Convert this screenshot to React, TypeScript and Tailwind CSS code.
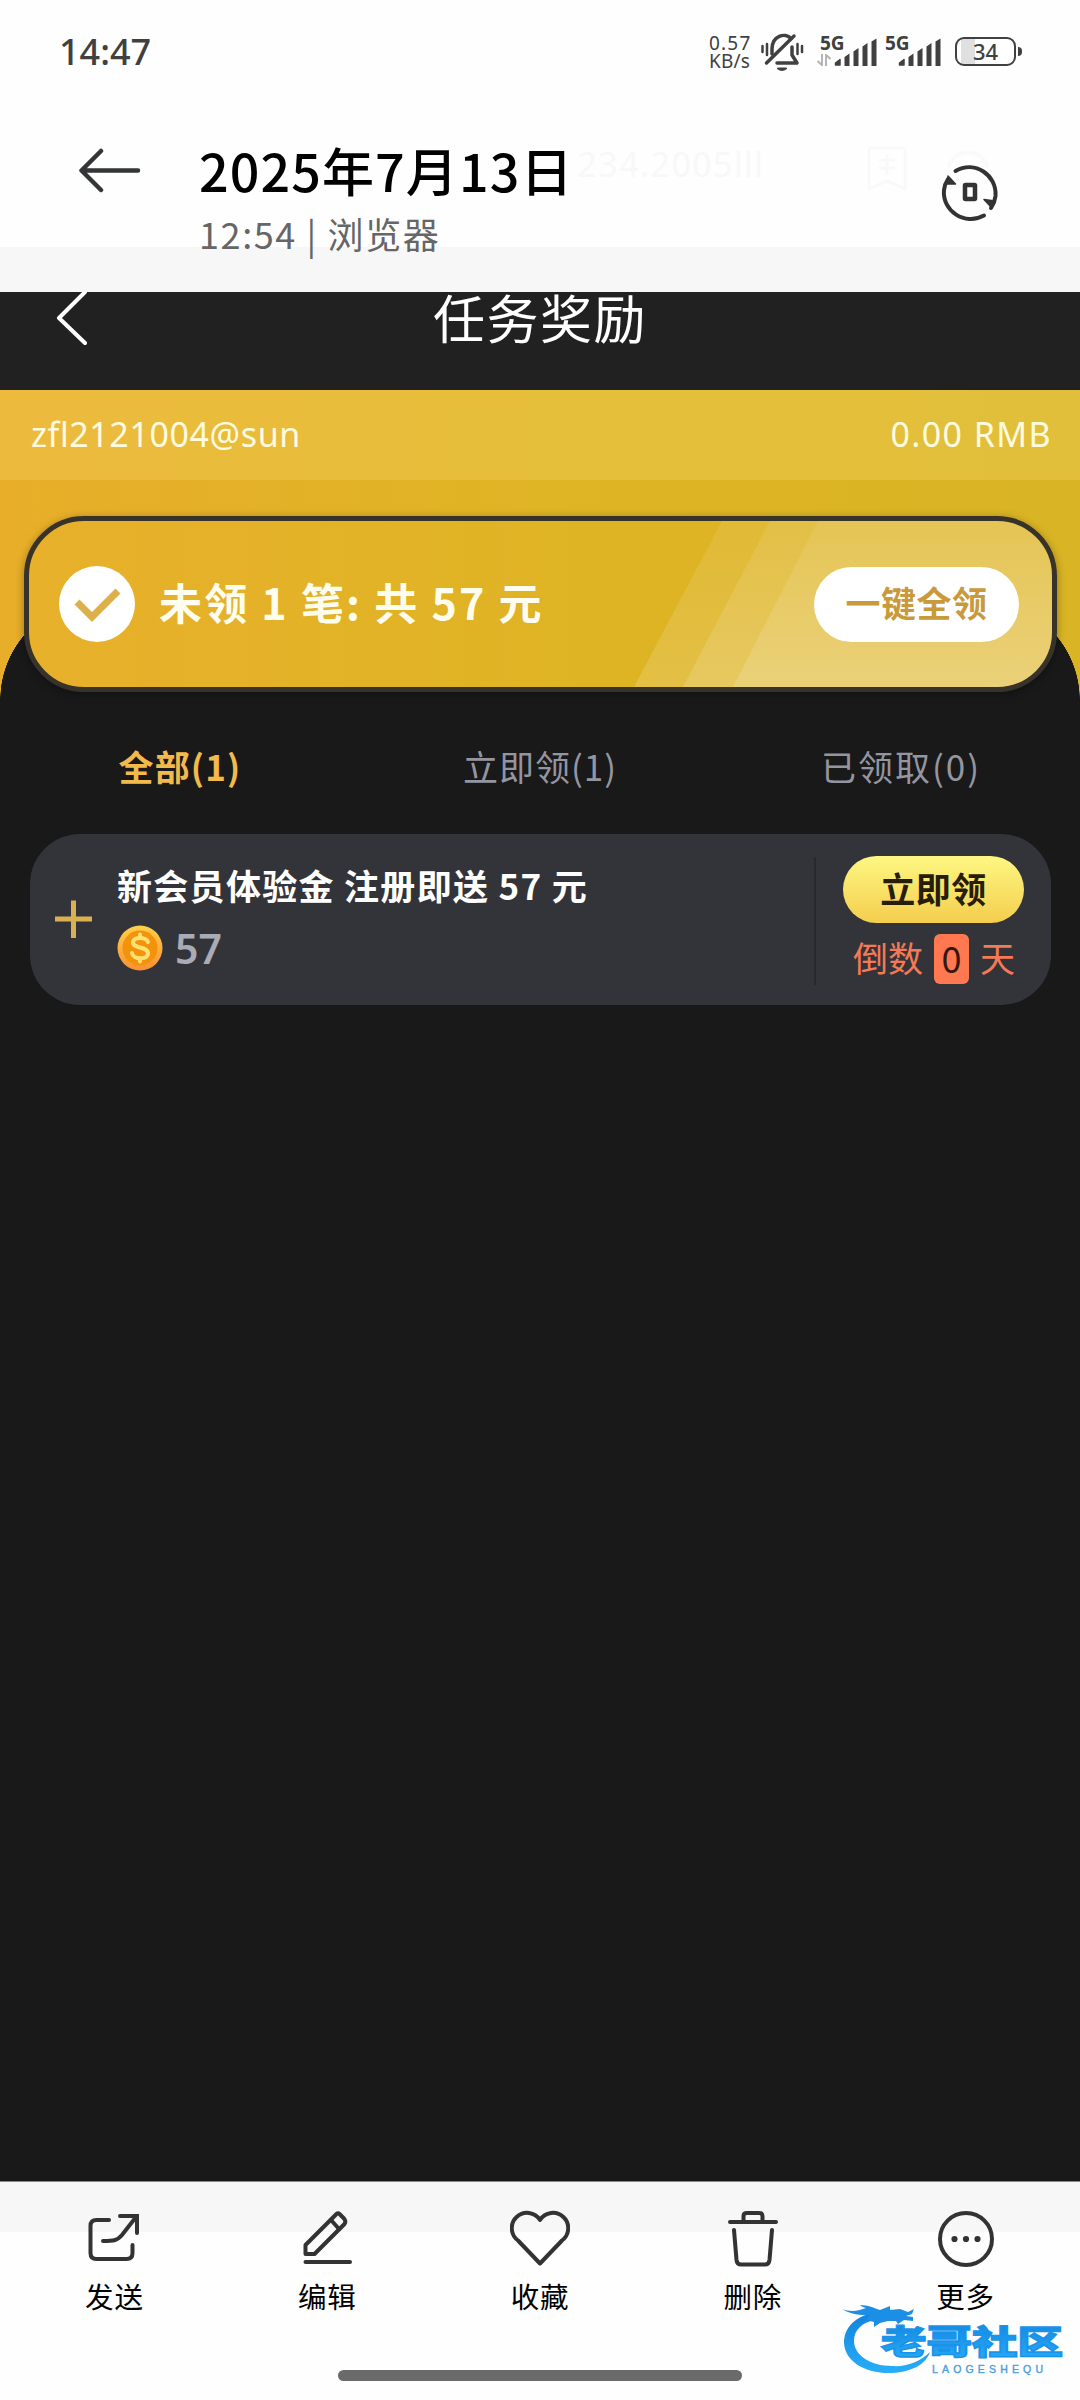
import React from 'react';
import { clsx } from 'clsx';

interface TabItem {
  label: string;
  active?: boolean;
  className: string;
}

interface ActionItem {
  label: string;
  icon: React.ReactNode;
}

const tabs: TabItem[] = [
  { label: '全部(1)', active: true, className: 'tracking-[1.2px]' },
  { label: '立即领(1)', className: 'tracking-[1px]' },
  { label: '已领取(0)', className: 'tracking-[2px] pl-[2px]' },
];

const SendIcon = () => (
  <svg className="h-[60px] w-[60px]" viewBox="0 0 60 60" fill="none" stroke="#333" strokeWidth="4" strokeLinecap="round">
    <path d="M25 12H12.5Q6.500 12 6.500 18V45Q6.500 51 12.500 51H42.500Q48.500 51 48.500 45V37" />
    <path d="M36 8H53V25" strokeLinejoin="miter" />
    <path d="M19 33C29 33 33 33 38 27L52 9" />
  </svg>
);

const EditIcon = () => (
  <svg className="h-[60px] w-[60px]" viewBox="0 0 60 60" fill="none" stroke="#333" strokeWidth="4" strokeLinecap="round" strokeLinejoin="round">
    <path d="M8.500 46V37L39.500 6Q41 4.500 42.500 6L47 10.500Q49.500 13.500 47.500 16L17.500 46Z" />
    <path d="M34 12L42 21" />
    <path d="M8.500 54H53" />
  </svg>
);

const HeartIcon = () => (
  <svg className="h-[60px] w-[60px]" viewBox="0 0 60 60" fill="none" stroke="#333" strokeWidth="4" strokeLinejoin="round">
    <path d="M30 55.500L8 32.500A15.300 15.300 0 1 1 30 12A15.300 15.300 0 1 1 52 32.500Z" />
  </svg>
);

const TrashIcon = () => (
  <svg className="h-[60px] w-[60px]" viewBox="0 0 60 60" fill="none" stroke="#333" strokeWidth="4" strokeLinecap="round" strokeLinejoin="round">
    <path d="M7 14H53" />
    <path d="M20.500 13V8Q20.500 5 24 5H36Q39.500 5 39.500 8V13" />
    <path d="M11 22L13.500 52Q14 56.500 18 56.500H42Q46 56.500 46.500 52L49 22" />
  </svg>
);

const MoreIcon = () => (
  <svg className="h-[60px] w-[60px]" viewBox="0 0 60 60">
    <circle cx="30" cy="31" r="26" fill="none" stroke="#333" strokeWidth="4" />
    <circle cx="18.500" cy="31" r="3.100" fill="#333" />
    <circle cx="30" cy="31" r="3.100" fill="#333" />
    <circle cx="41.500" cy="31" r="3.100" fill="#333" />
  </svg>
);

const actions: ActionItem[] = [
  { label: '发送', icon: <SendIcon /> },
  { label: '编辑', icon: <EditIcon /> },
  { label: '收藏', icon: <HeartIcon /> },
  { label: '删除', icon: <TrashIcon /> },
  { label: '更多', icon: <MoreIcon /> },
];

const Signal = () => (
  <svg className="mt-[37px] -ml-[11px] h-[30px] w-[44px] shrink-0" viewBox="0 0 44 30" fill="#404040">
    <path d="M1.500 28V26L6 22.500V28Z" stroke="#404040" strokeWidth="1.500" strokeLinejoin="round" />
    <path d="M10.500 20L15.500 16.500V29H10.500ZM19.500 14.500L24.500 11V29H19.500ZM28.500 9.500L33.500 6V29H28.500ZM37.500 4.500L42.500 1.500V29H37.500Z" />
  </svg>
);

const StatusBar = () => (
  <div className="flex h-[104px] items-start justify-between pr-[58px] pl-[59px]">
    <span className="mt-[31px] font-['Noto_Sans'] text-[36px] leading-[42px] font-medium text-[#404040]">14:47</span>
    <div className="flex items-start text-[#404040]">
      <div className="mt-[34px] flex w-[41px] flex-col font-['Noto_Sans'] text-[19px] leading-[18px] whitespace-nowrap">
        <span className="tracking-[1.2px]">0.57</span>
        <span className="tracking-[0.2px]">KB/s</span>
      </div>
      <svg className="mt-[32px] ml-[10px] h-[42px] w-[44px]" viewBox="0 0 44 42" fill="none" stroke="#404040" strokeWidth="3.500" strokeLinecap="round" strokeLinejoin="round">
        <path d="M12 22V17C12 4 25 0 31 6.500" />
        <path d="M6.500 31L34 4" />
        <path d="M32 15V23L37 31H17" />
        <path d="M18 36.500H26Q22 39.500 18 36.500Z" strokeWidth="2" />
        <path d="M2.500 14V20M7 12V23M37.500 12V22M42 14V20" strokeWidth="2.500" />
      </svg>
      <div className="mt-[32px] ml-[13px] w-[28px]">
        <span className="block pl-[3px] font-['Noto_Sans'] text-[19px] leading-[22px] font-bold">5G</span>
        <svg className="h-[12px] w-[14px]" viewBox="0 0 14 12" fill="none" stroke="#b5b5b5" strokeWidth="2">
          <path d="M5 0V11L0.500 7M9 12V1L13.500 5" />
        </svg>
      </div>
      <Signal />
      <span className="mt-[32px] ml-[7px] w-[24px] font-['Noto_Sans'] text-[19px] leading-[22px] font-bold">5G</span>
      <Signal />
      <div className="mt-[37px] ml-[13px] flex items-center">
        <div className="flex h-[29px] w-[61px] items-center justify-center rounded-[9px] border-[2.500px] border-[#404040] bg-[linear-gradient(90deg,#fff_4px,#e0e0e0_4px,#e0e0e0_18px,#fff_18px)] pb-px font-['Noto_Sans'] text-[22px] leading-none font-medium">
          34
        </div>
        <div className="ml-[2px] h-[9px] w-[4px] rounded-r-sm bg-[#404040]" />
      </div>
    </div>
  </div>
);

const PhotoHeader = () => (
  <header className="flex h-[188px] items-start bg-[linear-gradient(#fefefe_143px,#f7f7f7_143px)]">
    <svg className="mt-[44px] ml-[76px] h-[50px] w-[68px]" viewBox="0 0 68 50" fill="none" stroke="#333636" strokeWidth="4.500" strokeLinecap="round" strokeLinejoin="round">
      <path d="M62 22.500H6M25 3L5.500 22.500L25 42" />
    </svg>
    <div className="ml-[55px] flex-1 whitespace-nowrap">
      <div className="mt-[31px] flex h-[70px] items-center">
        <h1 className="text-[52px] leading-[70px] font-medium tracking-[1.1px] text-black">2025年7月13日</h1>
        <span className="mb-[12px] ml-[4px] font-['Noto_Sans'] text-[34px] tracking-[1.4px] text-[#f8f8f8]">234.2005lll</span>
      </div>
      <p className="mt-[5px] text-[36px] leading-[46px] tracking-[1.6px] text-[#666]">12:54 | 浏览器</p>
    </div>
    <svg className="mt-[41px] mr-[32px] h-[48px] w-[42px]" viewBox="0 0 42 48" fill="none" stroke="#f9f9f9" strokeWidth="3">
      <path d="M3 6Q3 3 6 3H36Q39 3 39 6V44L21 36L3 44ZM13 15H29M13 23H29M21 10V30" />
    </svg>
    <svg className="mt-[58px] mr-[80px] h-[62px] w-[60px] overflow-visible" viewBox="0 0 60 62" fill="none" stroke="#333" strokeWidth="4" strokeLinecap="round">
      <path d="M9 4A20 20 0 0 1 47 4" stroke="#fafafa" />
      <path d="M15.500 9C35 -2 57 13 55.500 34C55 39 53 43 51 46" />
      <path d="M44 53.500C25 64 2 49 4 28C4.500 23 6 20 8 17" />
      <path d="M8 14L15.500 22L7 22Z M52 46L44 37.500L55 39Z" fill="#333" strokeWidth="1.500" strokeLinejoin="round" />
      <rect x="25" y="23" width="10" height="14" rx="0.500" strokeWidth="4.500" />
    </svg>
  </header>
);

const RewardBanner = () => (
  <div className="relative mr-[23px] ml-[24px] flex h-[176px] items-center overflow-hidden rounded-[60px] border-[5px] border-[#37332a] bg-[linear-gradient(90deg,#e8b02b,#deb424_55%,#deb424)] pr-[33px] pl-[30px] shadow-[0_2px_8px_rgba(0,0,0,0.35)]">
    <svg className="absolute top-0 right-0 h-full w-[420px]" viewBox="0 0 420 166" preserveAspectRatio="none">
      <defs>
        <linearGradient id="shine" x1="0" y1="0" x2="0" y2="1">
          <stop offset="0" stopColor="#fff" stopOpacity="0.080" />
          <stop offset="1" stopColor="#fff" stopOpacity="0.150" />
        </linearGradient>
      </defs>
      <path d="M90 0H420V166H2Z" fill="url(#shine)" />
      <path d="M138 0H420V166H51Z" fill="url(#shine)" />
      <path d="M186 0H420V166H101Z" fill="url(#shine)" />
    </svg>
    <svg className="relative h-[76px] w-[76px]" viewBox="0 0 76 76">
      <circle cx="38" cy="38" r="38" fill="#fff" />
      <path d="M18 36L33 51L59 25" fill="none" stroke="#dcb04a" strokeWidth="7" />
    </svg>
    <p className="relative -mt-[5px] ml-[24px] flex-1 text-[43px] leading-none font-bold tracking-[2.2px] whitespace-nowrap text-[#fffdee]">未领 1 笔: 共 57 元</p>
    <button className="relative h-[75px] w-[205px] rounded-full bg-white pb-[5px] text-[35px] leading-none font-bold tracking-[0.500px] text-[#c99a3c]">
      一键全领
    </button>
  </div>
);

const Coin = () => (
  <svg className="h-[46px] w-[46px]" viewBox="0 0 46 46">
    <defs>
      <linearGradient id="coinRim" x1="0" y1="0" x2="0" y2="1">
        <stop offset="0" stopColor="#ffd04a" />
        <stop offset="1" stopColor="#fb9034" />
      </linearGradient>
    </defs>
    <circle cx="23" cy="23" r="22.500" fill="url(#coinRim)" />
    <circle cx="23" cy="23" r="17.500" fill="#f3930c" />
    <path d="M31 17C30 12 16 11 16 17.500C16 24 31 21 31 28.500C31 35 16 35 15 28M23 9.500V13M23 33V36.500" fill="none" stroke="#ffe173" strokeWidth="4" strokeLinecap="round" />
  </svg>
);

const TaskCard = () => (
  <article className="mr-[29px] ml-[30px] flex h-[171px] rounded-[50px] bg-[#333439]">
    <svg className="mt-[65px] ml-[24px] h-[40px] w-[40px]" viewBox="0 0 40 40" stroke="#d9b052" strokeWidth="5">
      <path d="M1 20H38M19.500 1.500V39" />
    </svg>
    <div className="mt-[28px] ml-[23px] w-[697px]">
      <h2 className="text-[35px] leading-[46px] font-bold tracking-[1.3px] whitespace-nowrap text-white">新会员体验金 注册即送 57 元</h2>
      <div className="mt-[17px] flex items-center">
        <Coin />
        <span className="ml-[12px] font-['Noto_Sans'] text-[41px] leading-none font-semibold text-[#a9abb5]">57</span>
      </div>
    </div>
    <div className="mt-[23px] h-[128px] w-[2px] bg-[#28292d]" />
    <div className="mt-[22px] ml-[27px] w-[181px]">
      <button className="block h-[67px] w-full rounded-full bg-linear-to-b from-[#fdf782] to-[#f4ce4c] pb-[5px] text-[35px] leading-none font-bold tracking-[0.5px] text-[#271d08]">立即领</button>
      <div className="mt-[11px] flex items-start justify-center pl-px text-[35px] leading-[46px] text-[#f47a55]">
        倒数
        <span className="mx-[11px] h-[50px] w-[35px] rounded-[6px] bg-[#ff7850] text-center text-[36px] leading-[46px] text-[#35170f]">0</span>
        天
      </div>
    </div>
  </article>
);

const Screenshot = () => (
  <main className="h-[1889px] bg-[#191919]">
    <div className="flex h-[98px] items-start bg-[#212121]">
      <svg className="ml-[54px] h-[58px] w-[38px]" viewBox="0 0 38 58" fill="none" stroke="#fff" strokeWidth="4" strokeLinecap="round" strokeLinejoin="round">
        <path d="M31 0L5 26L31 51" />
      </svg>
      <h1 className="mr-[92px] flex-1 text-center text-[52px] leading-[50px] tracking-[1.500px] text-white">任务奖励</h1>
    </div>
    <div className="bg-[linear-gradient(90deg,#e8ae29,#dfb425_50%,#d9b424)]">
      <div className="flex h-[90px] items-center justify-between bg-[#fbe07c]/25 pr-[28px] pb-[2px] pl-[31px] font-['Noto_Sans'] text-[34px] text-[#fffbe0]">
        <span className="tracking-[0.6px]">zfl2121004@sun</span>
        <span className="tracking-[1.4px]">0.00 RMB</span>
      </div>
      {/* rounded corners of the dark sheet that starts behind the banner */}
      <div className="bg-[radial-gradient(circle_100px_at_100px_220px,#191919_99.500px,transparent_100px),radial-gradient(circle_100px_at_980px_220px,#191919_99.500px,transparent_100px)] pt-[36px]">
        <RewardBanner />
        <div className="mx-[60px] h-[8px] bg-[#191919]" />
      </div>
    </div>
    <div className="grid h-[134px] grid-cols-3 text-center text-[35px] leading-[132px]">
      {tabs.map((tab) => (
        <span key={tab.label} className={clsx(tab.className, tab.active ? 'font-bold text-[#f2ba4b]' : 'text-[#9495a0]')}>
          {tab.label}
        </span>
      ))}
    </div>
    <TaskCard />
  </main>
);

const Watermark = () => (
  <svg className="absolute top-[2300px] left-[838px] h-[80px] w-[232px]" viewBox="0 0 232 80">
    <defs>
      <linearGradient id="brand" x1="0" y1="0" x2="0" y2="1">
        <stop offset="0" stopColor="#1183dc" />
        <stop offset="1" stopColor="#27aef9" />
      </linearGradient>
    </defs>
    <path d="M34 13C14 18 6 30 6 43C7 62 28 74 54 73C74 72 88 64 92 52C82 62 68 67 54 66C32 66 16 55 16 41C16 30 24 22 38 20Z" fill="url(#brand)" />
    <path d="M4 9C14 13 22 10 28 8C24 7 23 6 22 5C30 5 36 8 42 10L52 6L52 10L62 9L70 12L76 9L74 14L68 16L75 17L75 21L66 20L60 24L58 21L50 21L42 23L36 27L36 22L28 20L32 15C22 16 10 13 4 9Z" fill="#1b8fe6" />
    <text x="43" y="54" textLength="182" lengthAdjust="spacingAndGlyphs" fontFamily="Noto Sans CJK SC" fontSize="33" fontWeight="900" fill="url(#brand)" stroke="#1a93ea" strokeWidth="1.500">老哥社区</text>
    <text x="94" y="72.500" textLength="111" fontFamily="Liberation Sans" fontSize="10.500" fill="#4b9fe0" stroke="#4b9fe0" strokeWidth="0.400">LAOGESHEQU</text>
  </svg>
);

const ActionBar = () => (
  <footer className="h-[219px] border-t border-[#8a8a8a] bg-[linear-gradient(#f7f7f7_50px,#fefefe_50px)] pr-[8px] pl-[8px]">
    <div className="flex h-[188px] pt-[26px]">
      {actions.map((action) => (
        <button key={action.label} className="flex flex-1 flex-col items-center text-[28.500px] leading-[40px] text-black">
          {action.icon}
          <span className="mt-[8px] tracking-[0.8px]">{action.label}</span>
        </button>
      ))}
    </div>
    <div className="mx-auto h-[11px] w-[404px] rounded-full bg-[#6a6a6a]" />
  </footer>
);

const App: React.FC = () => {
  return (
    <div className="relative h-[2400px] w-[1080px] overflow-hidden bg-[#fefefe] font-['Noto_Sans_CJK_SC',sans-serif]">
      <StatusBar />
      <PhotoHeader />
      <Screenshot />
      <ActionBar />
      <Watermark />
    </div>
  );
};

export default App;
